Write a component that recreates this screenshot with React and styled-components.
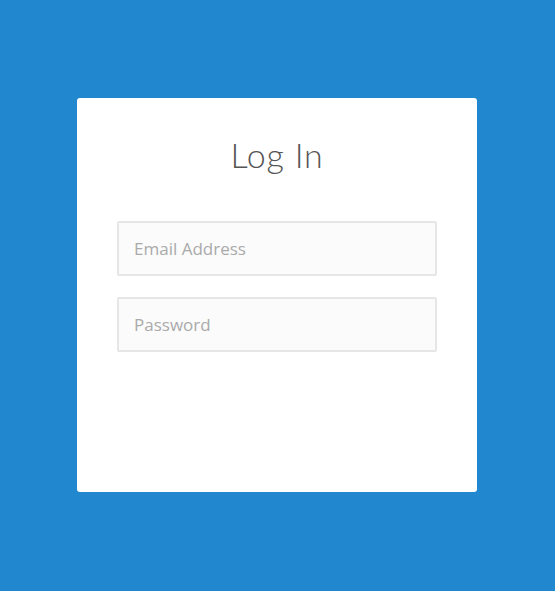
import React from 'react';
import styled, { createGlobalStyle } from 'styled-components';

const GlobalStyle = createGlobalStyle`
    html, body {
        margin: 0;
        padding: 0;
        background-color: #2188cf;
        font-family: Lato, "Noto Sans", sans-serif;
    }
`

const Page = styled.div`
    width: 555px;
    height: 591px;
    padding: 98px 0 0 77px;
    box-sizing: border-box;
    display: flex;
    align-items: flex-start;
`

const Card = styled.form`
    width: 400px;
    height: 394px;
    box-sizing: border-box;
    background-color: #fff;
    border-radius: 3px;
    padding: 37px 40px 0;
    display: flex;
    flex-direction: column;
    align-items: center;
`

const Title = styled.h1`
    margin: 0 0 46px;
    font-size: 34px;
    font-weight: 300;
    color: #555;
    line-height: 40px;
    letter-spacing: 0.8px;
`

const Field = styled.input`
    width: 320px;
    height: 55px;
    box-sizing: border-box;
    margin-bottom: ${props => props.last ? '0' : '21px'};
    padding: 0 15px;
    border: 2px solid #e6e6e6;
    border-radius: 2px;
    background-color: #fbfbfb;
    font-family: "Open Sans", "Noto Sans", sans-serif;
    font-size: 17px;
    color: #555;
    outline: none;

    &::placeholder {
        color: #aaa;
    }
`

function App() {
    return (
        <>
            <GlobalStyle />
            <Page>
                <Card onSubmit={e => e.preventDefault()}>
                    <Title>Log In</Title>
                    <Field type='email' placeholder='Email Address' />
                    <Field type='password' placeholder='Password' last />
                </Card>
            </Page>
        </>
    );
}

export default App;
